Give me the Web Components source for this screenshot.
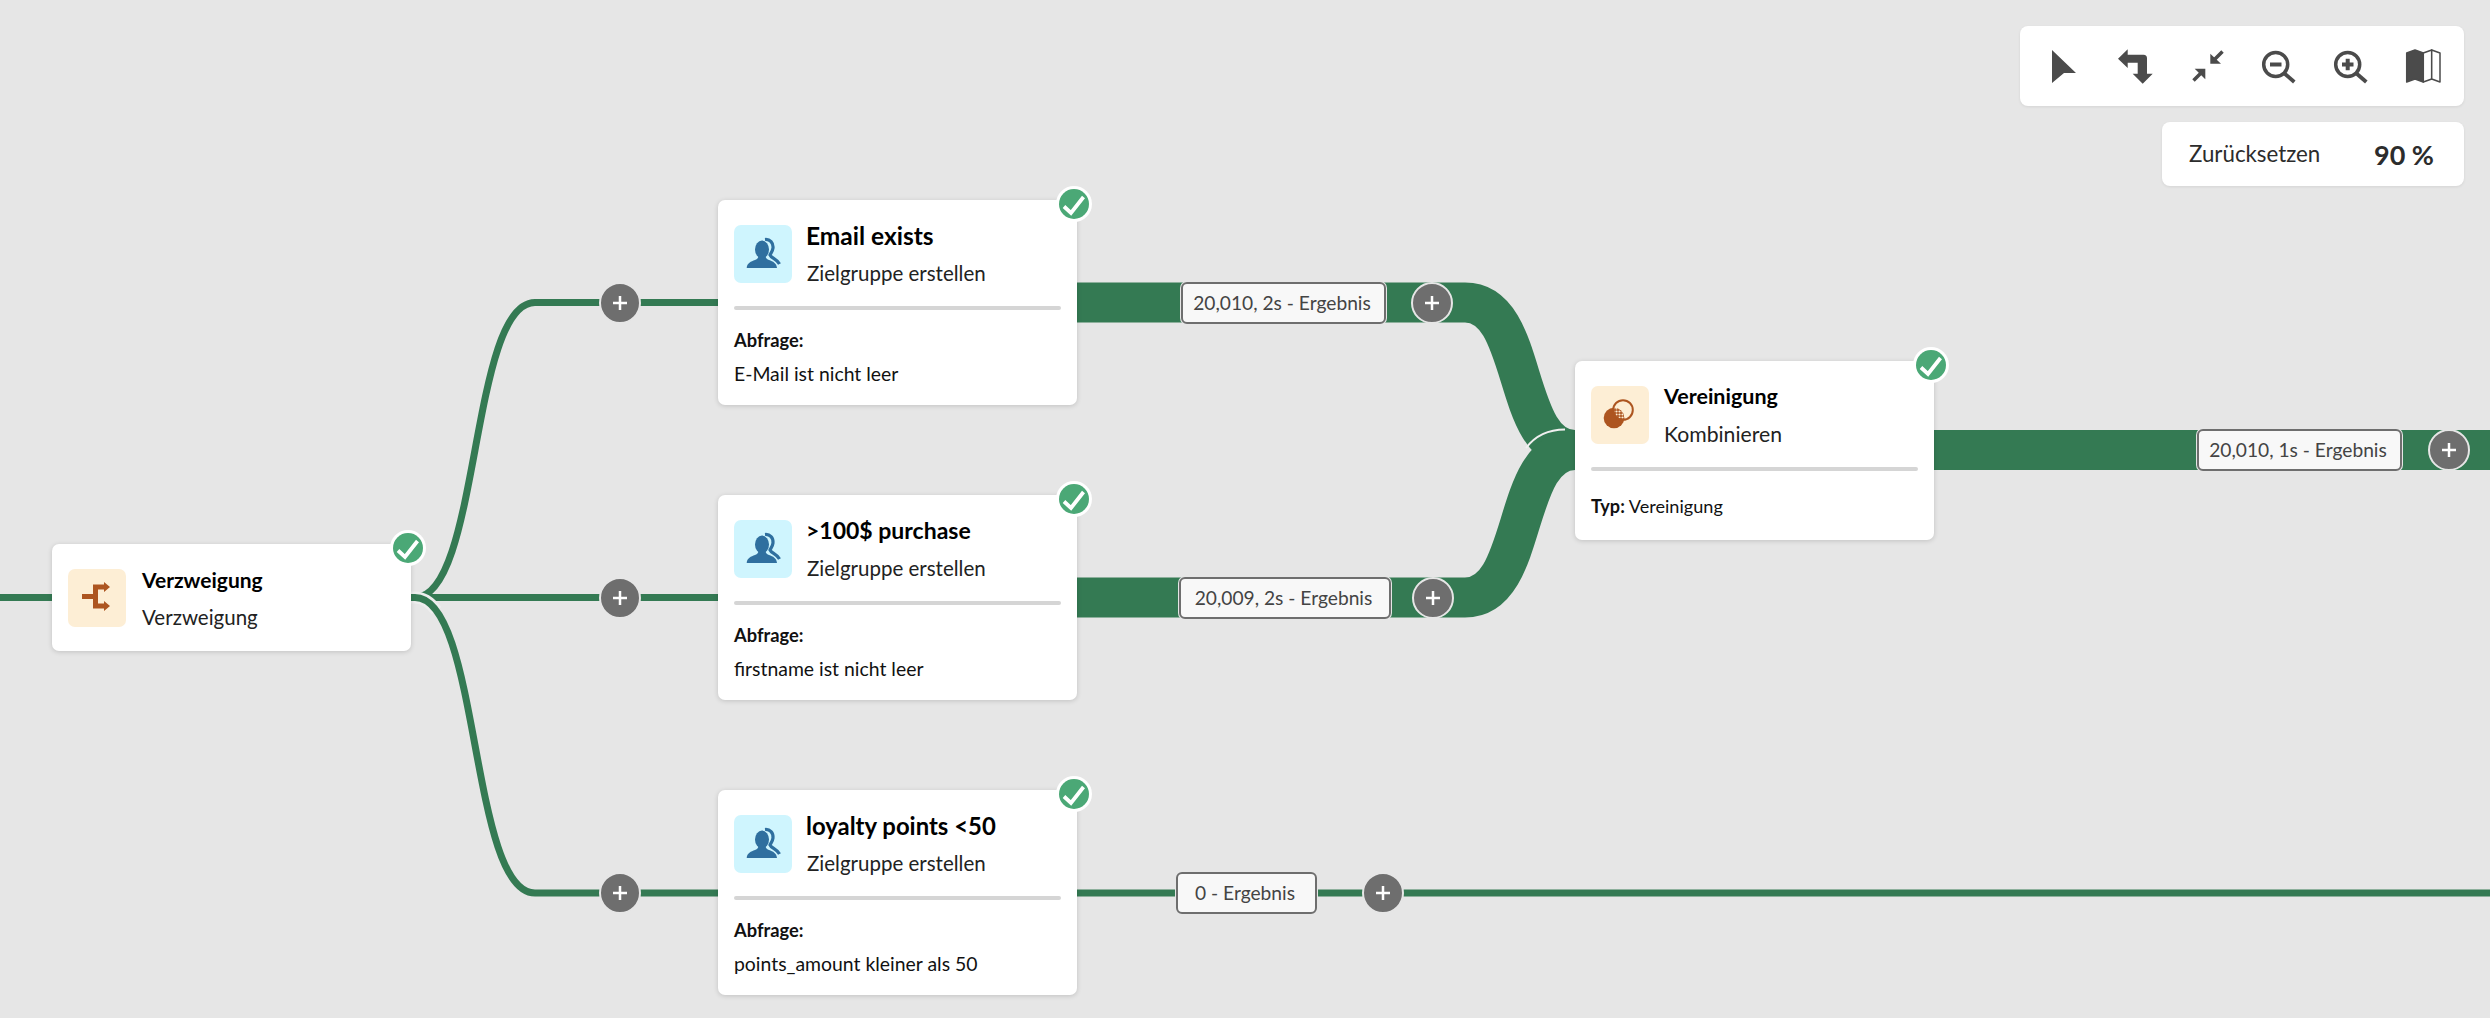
<!doctype html>
<html lang="de"><head><meta charset="utf-8"><title>Workflow</title>
<style>html,body{margin:0;height:100%;background:#e6e6e6;overflow:hidden;font-family:Lato,"Noto Sans",sans-serif}</style>
</head><body>
<wf-canvas>
  <wf-edges></wf-edges>

  <wf-node style="left:52px;top:544px;--title:21px;--sub:20.5px" heading="Verzweigung" sub="Verzweigung"><wf-glyph slot="icon" kind="split"></wf-glyph></wf-node>

  <wf-node style="left:718px;top:200px;--tx:-2px;--sx:-1px" heading="Email exists" sub="Zielgruppe erstellen"><wf-glyph slot="icon" kind="audience"></wf-glyph>
    <b>Abfrage:</b><span>E-Mail ist nicht leer</span></wf-node>
  <wf-node style="left:718px;top:495px;--tx:-2px;--sx:-1px;--title:23px" heading="&gt;100$ purchase" sub="Zielgruppe erstellen"><wf-glyph slot="icon" kind="audience"></wf-glyph>
    <b>Abfrage:</b><span>firstname ist nicht leer</span></wf-node>
  <wf-node style="left:718px;top:790px;--tx:-2px;--sx:-1px;--title:23.9px" heading="loyalty points &lt;50" sub="Zielgruppe erstellen"><wf-glyph slot="icon" kind="audience"></wf-glyph>
    <b>Abfrage:</b><span>points_amount kleiner als 50</span></wf-node>

  <wf-node style="left:1575px;top:361px;--title:21.5px;--sub:21.2px;--tx:-1px;--sx:-1px;--bodygap:19px;--pb:17px;--val:18.1px" heading="Vereinigung" sub="Kombinieren"><wf-glyph slot="icon" kind="union"></wf-glyph>
    <div><b>Typ:</b> Vereinigung</div></wf-node>

  <wf-add style="left:620px;top:302.5px"></wf-add>
  <wf-add style="left:620px;top:597.5px"></wf-add>
  <wf-add style="left:620px;top:893px"></wf-add>
  <wf-add style="left:1432px;top:302.5px"></wf-add>
  <wf-add style="left:1433px;top:597.5px"></wf-add>
  <wf-add style="left:1383px;top:893px"></wf-add>
  <wf-add style="left:2449px;top:450px"></wf-add>

  <wf-count style="left:1181px;top:282px;width:205px">20,010, 2s - Ergebnis</wf-count>
  <wf-count style="left:1179px;top:577px;width:212px">20,009, 2s - Ergebnis</wf-count>
  <wf-count style="left:2197px;top:429px;width:205px">20,010, 1s - Ergebnis</wf-count>
  <wf-count style="left:1176px;top:872px;width:141px">0 - Ergebnis</wf-count>

  <wf-controls>
    <wf-toolbar>
      <wf-glyph kind="select"></wf-glyph><wf-glyph kind="route"></wf-glyph><wf-glyph kind="collapse"></wf-glyph>
      <wf-glyph kind="zoomout"></wf-glyph><wf-glyph kind="zoomin"></wf-glyph><wf-glyph kind="map"></wf-glyph>
    </wf-toolbar>
    <wf-zoom value="90 %">Zurücksetzen</wf-zoom>
  </wf-controls>
</wf-canvas>
<script>
const GREEN='#347a53';
const def=(name,html,extra)=>{
  customElements.define(name,class extends HTMLElement{
    constructor(){super();const r=this.attachShadow({mode:'open'});r.innerHTML=html;}
    connectedCallback(){extra&&extra(this);}
  });
};
const ICONS={
 split:`<svg viewBox="0 0 58 58" width="58" height="58" fill="#ad5520"><path d="M14 25H25V15.500H36V13L42 18L36 23V20.500H30V34.500H36V32L42 37L36 42V39.500H25V30H14Z"/></svg>`,
 audience:`<svg viewBox="0 0 58 58" width="58" height="58"><path d="M31 14.500C36 14 39.500 18 39 23C38.700 26 37 28 36 30C37 33 43 34 45.500 39" fill="none" stroke="#2f6f9f" stroke-width="3.200"/><ellipse cx="28" cy="24.500" rx="7" ry="9" fill="#2f6f9f"/><path d="M12.700 43C13 38 17 36.500 21 35C23.500 34 24.500 32.500 24.500 31H31.500C31.500 32.500 32.500 34 35 35C39 36.500 42.500 38 43 43Z" fill="#2f6f9f"/></svg>`,
 union:`<svg viewBox="0 0 58 58" width="58" height="58"><defs><pattern id="d" width="3" height="3" patternUnits="userSpaceOnUse"><rect width="3" height="3" fill="#ad5520"/><circle cx="1.500" cy="1.500" r="1.100" fill="#fdeed5"/></pattern><clipPath id="c"><circle cx="32" cy="24" r="9.500"/></clipPath></defs><circle cx="23" cy="32" r="10.300" fill="#ad5520"/><circle cx="23" cy="32" r="10.300" fill="url(#d)" clip-path="url(#c)"/><circle cx="32" cy="24" r="9.800" fill="none" stroke="#ad5520" stroke-width="2"/></svg>`,
 select:`<svg viewBox="0 0 36 36" width="36" height="36" fill="#4b4b4b"><path d="M6 2L30 25H18L6 35Z"/></svg>`,
 route:`<svg viewBox="0 0 36 36" width="36" height="36" fill="#4b4b4b"><path d="M0 10.700L9.700 1.300V6.700H25.500Q29 6.700 29 10.200V25.700H34.700L24.700 35.700L14.700 25.700H19.700V14.700H9.700V20Z"/></svg>`,
 collapse:`<svg viewBox="0 0 36 36" width="36" height="36" fill="#4b4b4b"><path d="M20.300 5.700V15.700H31Z"/><path d="M4.700 20.700H15.300V31.300Z"/><path d="M32.500 3.500L24 12M3.500 32.500L12 24" stroke="#4b4b4b" stroke-width="3.500"/></svg>`,
 zoomout:`<svg viewBox="0 0 36 36" width="36" height="36" fill="none" stroke="#4b4b4b" stroke-width="3.500"><circle cx="14.700" cy="16.500" r="12"/><path d="M23.500 25.500L33.300 34" stroke-width="3.800"/><path d="M9 16.500H20.500" stroke-width="4"/></svg>`,
 zoomin:`<svg viewBox="0 0 36 36" width="36" height="36" fill="none" stroke="#4b4b4b" stroke-width="3.500"><circle cx="14.700" cy="16.500" r="12"/><path d="M23.500 25.500L33.300 34" stroke-width="3.800"/><path d="M9 16.500H20.500M14.700 10.700V22.300" stroke-width="4"/></svg>`,
 map:`<svg viewBox="0 0 36 36" width="36" height="36" fill="#4b4b4b" stroke="#4b4b4b" stroke-width="1.500" stroke-linejoin="round"><path d="M1.700 5L10 2L18.300 5V34L10 31L1.700 34Z"/><path d="M18.300 5L26.700 2V31L18.300 34Z" fill="#fff"/><path d="M26.700 2L35 5V34L26.700 31Z" fill="#fff"/></svg>`,
 check:`<svg viewBox="0 0 36 36" width="36" height="36"><circle cx="18" cy="18" r="18" fill="#fff"/><circle cx="18" cy="18" r="15" fill="#4ba876"/><path d="M8 20.500L15 27L27.500 11" fill="none" stroke="#fff" stroke-width="3.800"/></svg>`
};
def('wf-glyph',`<style>:host{display:block;line-height:0}svg{display:block}</style><span></span>`,el=>{
  el.shadowRoot.querySelector('span').innerHTML=ICONS[el.getAttribute('kind')]||'';
});
def('wf-canvas',`<style>:host{display:block;position:relative;width:2490px;height:1018px;background:#e6e6e6;overflow:hidden;font-family:Lato,"Noto Sans",sans-serif}</style><slot></slot>`);
def('wf-edges',`<style>:host{position:absolute;inset:0;display:block}svg{display:block}</style>
<svg width="2490" height="1018" viewBox="0 0 2490 1018" fill="none" stroke="${GREEN}">
  <g stroke-width="7">
    <path d="M0 597.500H52"/>
    <path d="M411 597.500H718"/>
    <path d="M415 597.500C480 597.500 470 302.500 535 302.500H718"/>
    <path d="M411 597.500H415C480 597.500 470 893 535 893" stroke="#eeeeee" stroke-width="12" stroke-dasharray="30 2000"/>
    <path d="M411 597.500H415C480 597.500 470 893 535 893H718"/>
    <path d="M1077 893H2490"/>
  </g>
  <g stroke-width="40">
    <path d="M1077 302.500H1465C1530 302.500 1510 450 1575 450H1585"/>
    <path d="M1077 597.500H1465C1530 597.500 1510 450 1575 450H1585"/>
    <path d="M1934 450H2490"/>
  </g>
  <path d="M1526 448C1535 436 1548 429.500 1565 429.500" stroke="#f0f0f0" stroke-width="2"/>
</svg>`);
def('wf-node',`<style>
:host{position:absolute;display:block;box-sizing:border-box;width:359px;padding:25px 16px var(--pb,15px);background:#fff;border-radius:7px;box-shadow:0 1px 5px rgba(0,0,0,.16);color:#111}
.head{display:flex;gap:16px;align-items:flex-start}
.ico{width:58px;height:58px;border-radius:7px;background:#fdeed5;flex:none;display:block}
.txt{margin:-8px 0 -9px}
h3{margin:0 0 0 var(--tx,0);font:700 var(--title,24.500px)/37px Lato,sans-serif;color:#000}
p{margin:1px 0 0 var(--sx,0);font:400 var(--sub,20.500px)/37px Lato,sans-serif;color:#222}
hr{border:0;height:4px;border-radius:2px;background:#d5d5d5;margin:23px 0 var(--bodygap,14px)}
.body{font:400 var(--val,19.400px)/33px Lato,sans-serif;color:#111}
::slotted(b){display:block;font-size:18.300px}
::slotted(span){display:block}
.badge{position:absolute;top:-14px;right:-15px}
</style>
<div class="head"><div class="ico"><slot name="icon"></slot></div><div class="txt"><h3></h3><p></p></div></div>
<div class="rule"><hr></div><div class="body"><slot></slot></div>
<wf-glyph class="badge" kind="check"></wf-glyph>`,el=>{
  const r=el.shadowRoot;
  r.querySelector('h3').textContent=el.getAttribute('heading');
  r.querySelector('p').textContent=el.getAttribute('sub');
  const g=el.querySelector('[slot=icon]');
  if(g&&g.getAttribute('kind')==='audience')r.querySelector('.ico').style.background='#cff5fe';
  if(!el.textContent.trim()){r.querySelector('.rule').style.display='none';r.querySelector('.body').style.display='none';el.style.paddingBottom='24px';}
});
def('wf-add',`<style>:host{position:absolute;display:block;width:42px;height:42px;box-sizing:border-box;margin:-21px 0 0 -21px;border-radius:50%;background:#6e6e6e;border:2px solid #e6e6e6}
svg{display:block;width:38px;height:38px}</style>
<svg viewBox="0 0 38 38"><path d="M12 19H26M19 12V26" stroke="#fff" stroke-width="2.500"/></svg>`);
def('wf-count',`<style>:host{position:absolute;display:flex;align-items:center;justify-content:center;box-sizing:border-box;height:42px;padding-right:3px;background:#f8f8f8;border:2px solid #6e6e6e;border-radius:6px;box-shadow:0 0 0 1px #e6e6e6;font:400 19.200px/1 Lato,sans-serif;color:#444;white-space:nowrap}</style><slot></slot>`);
def('wf-controls',`<style>:host{position:absolute;top:26px;right:26px;display:flex;flex-direction:column;align-items:flex-end;gap:16px}</style><slot></slot>`);
def('wf-toolbar',`<style>:host{display:flex;align-items:center;gap:35.800px;box-sizing:border-box;width:444px;height:80px;padding:0 23px 0 26px;background:#fff;border-radius:8px;box-shadow:0 1px 3px rgba(0,0,0,.08)}</style><slot></slot>`);
def('wf-zoom',`<style>:host{display:flex;align-items:center;justify-content:space-between;box-sizing:border-box;width:302px;height:64px;padding:0 30px 0 27px;background:#fff;border-radius:8px;box-shadow:0 1px 3px rgba(0,0,0,.08);font:400 22.300px/1 Lato,sans-serif;color:#2c2c2c}
b{font:700 27px/1 Lato,sans-serif}</style><span><slot></slot></span><b></b>`,el=>{
  el.shadowRoot.querySelector('b').textContent=el.getAttribute('value');
});
</script>
</body></html>
